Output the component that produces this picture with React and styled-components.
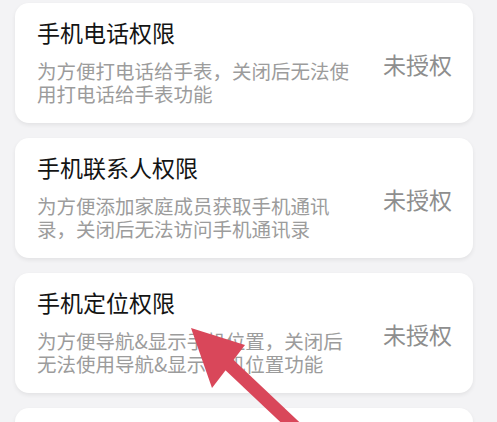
import React from "react";
import styled, { createGlobalStyle } from "styled-components";

const GlobalStyle = createGlobalStyle`
  html, body {
    margin: 0;
    padding: 0;
    background: #f3f3f5;
    font-family: "Noto Sans CJK SC", "Noto Sans", sans-serif;
  }
`;

const items = [
  {
    title: "手机电话权限",
    lines: ["为方便打电话给手表，关闭后无法使", "用打电话给手表功能"],
  },
  {
    title: "手机联系人权限",
    lines: ["为方便添加家庭成员获取手机通讯", "录，关闭后无法访问手机通讯录"],
  },
  {
    title: "手机定位权限",
    lines: ["为方便导航&显示手机位置，关闭后", "无法使用导航&显示手机位置功能"],
  },
  { title: "", lines: [] },
];

const Page = styled.div`
  position: relative;
  width: 497px;
  height: 422px;
  overflow: hidden;
  box-sizing: border-box;
  padding: 3px 24px 0 15px;
  display: flex;
  flex-direction: column;
  gap: 15px;
`;

const Card = styled.div`
  flex: none;
  height: 120px;
  box-sizing: border-box;
  background: #fff;
  border-radius: 14px;
  box-shadow: 0 2px 4px rgba(0, 0, 0, 0.07);
  padding: 15px 21px 0 22px;
  display: flex;
  align-items: center;
`;

const Info = styled.div`
  flex: 1;
  align-self: flex-start;
`;

const Title = styled.div`
  font-size: 23px;
  line-height: 28px;
  color: #141414;
`;

const Desc = styled.div`
  margin-top: 13px;
  font-size: 19.5px;
  line-height: 23px;
  color: #9c9c9c;
  white-space: nowrap;
`;

const Status = styled.div`
  font-size: 23px;
  color: #8e8e8e;
  margin-top: -14px;
`;

const Arrow = styled.svg`
  position: absolute;
  left: 0;
  top: 0;
  pointer-events: none;
`;

export default function App() {
  return (
    <>
      <GlobalStyle />
      <Page>
        {items.map((it, i) => (
          <Card key={i}>
            <Info>
              <Title>{it.title}</Title>
              <Desc>
                {it.lines.map((l, j) => (
                  <div key={j}>{l}</div>
                ))}
              </Desc>
            </Info>
            {it.title && <Status>未授权</Status>}
          </Card>
        ))}
        <Arrow width="497" height="422" viewBox="0 0 497 422">
          <line x1="222" y1="358" x2="330" y2="460" stroke="#d9475a" strokeWidth="13" />
          <polygon points="191,328 245,345 212,388" fill="#d9475a" />
        </Arrow>
      </Page>
    </>
  );
}
